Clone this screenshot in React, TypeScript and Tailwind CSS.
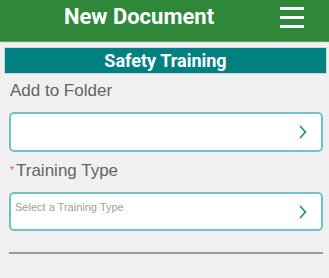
import React from "react";

function Chevron() {
  return (
    <svg width="8" height="14" viewBox="0 0 8 14" fill="none">
      <polyline points="1.5,1.5 6.5,7 1.5,12.5" stroke="#2a8e95" strokeWidth="1.8" strokeLinecap="round" strokeLinejoin="round" />
    </svg>
  );
}

export default function App() {
  return (
    <div className="w-[329px] h-[278px] bg-[#f0f0f0] overflow-hidden" style={{ fontFamily: '"Liberation Sans", Arial, sans-serif' }}>
      <div className="h-[42px] bg-[#2f873a] border-b border-[#5aa463]">
        <div className="h-[34px] flex items-center">
          <div className="w-[278px] text-center text-white font-bold text-[22px] leading-[26px]" style={{ fontFamily: 'Roboto, "Liberation Sans", sans-serif' }}>
            New Document
          </div>
          <div className="ml-[2px] w-[24px] flex flex-col gap-[6px] pt-[1px]">
            <div className="h-[3px] bg-white" />
            <div className="h-[3px] bg-white" />
            <div className="h-[3px] bg-white" />
          </div>
        </div>
      </div>
      <div className="h-px bg-[#e2e2e2]" />
      <div className="mt-[4px] ml-[4px] w-[323px] h-[27px] bg-[#008080] border border-[#cfd8d8] flex items-center justify-center text-white font-bold text-[18px]" style={{ fontFamily: 'Roboto, "Liberation Sans", sans-serif' }}>
        Safety Training
      </div>
      <div className="mt-[7px] ml-[10px] text-[17px] leading-[20px] text-[#646464]">Add to Folder</div>
      <div className="mt-[11px] ml-[9px] w-[314px] h-[40px] bg-white border-2 border-[#72c2c5] rounded-[5px] flex items-center justify-end pr-[14px]">
        <Chevron />
      </div>
      <div className="mt-[9px] ml-[10px] h-[20px] flex items-start text-[#646464]">
        <span className="w-[6px] text-[10px] leading-[10px] text-[#d9534f] mt-[5px]">*</span>
        <span className="text-[17px] leading-[20px]">Training Type</span>
      </div>
      <div className="mt-[11px] ml-[9px] w-[314px] h-[39px] bg-white border-2 border-[#72c2c5] rounded-[5px] flex items-start justify-between pl-[4px] pr-[14px] pt-[7px]">
        <span className="text-[11px] leading-[13px] text-[#a0a0a0]">Select a Training Type</span>
        <span className="mt-[4px]"><Chevron /></span>
      </div>
      <div className="mt-[21px] ml-[9px] w-[314px] h-[2px] bg-[#9b9b9b]" />
    </div>
  );
}
